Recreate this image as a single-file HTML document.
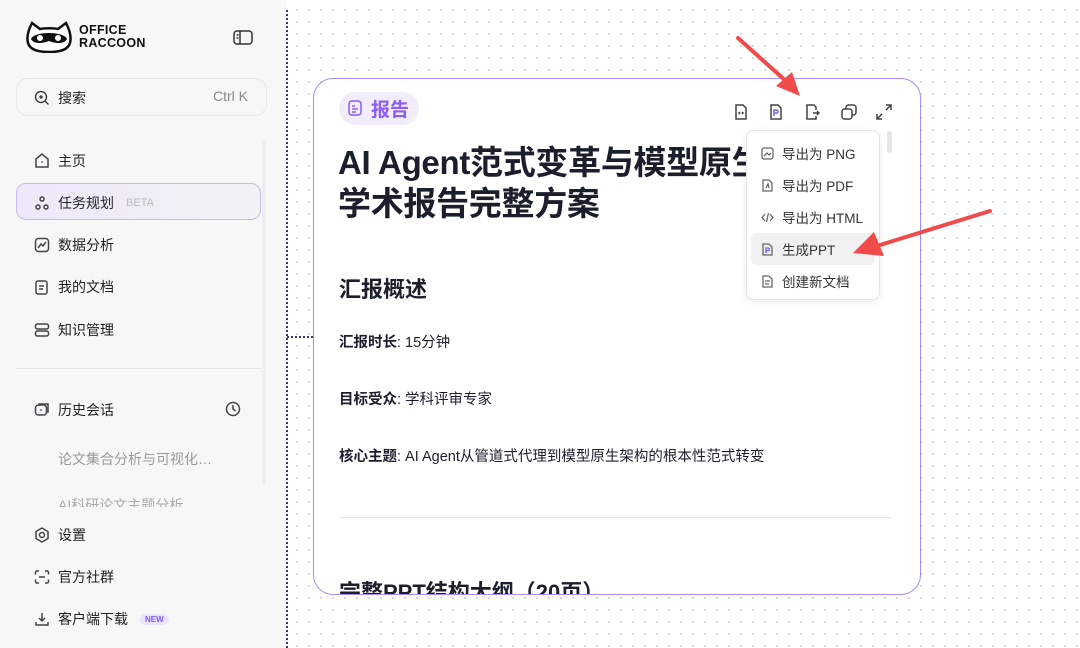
<!DOCTYPE html>
<html><head><meta charset="utf-8"><style>
*{margin:0;padding:0;box-sizing:border-box}
body{width:1080px;height:648px;overflow:hidden;font-family:"Liberation Sans","Noto Sans CJK SC",sans-serif;background:#fff;position:relative;color:#1f2430}
.side{position:absolute;left:0;top:0;width:286px;height:648px;background:#f7f7f7}
.canvas{position:absolute;left:287px;top:0;right:0;bottom:0;background-color:#fff;background-image:radial-gradient(#d8d8d8 1px,transparent 1.3px);background-size:12px 12px;background-position:4px 4px}
.vline{position:absolute;left:286px;top:10px;width:2px;height:638px;border-left:2px dotted #3b3470}
.nav{position:absolute;left:34px;font-size:14px;color:#222;display:flex;align-items:center;gap:8px}
.nav svg{width:16px;height:16px;fill:none;stroke:#444;stroke-width:1.5}
.card{position:absolute;left:313px;top:78px;width:608px;height:517px;border:1.5px solid #a78bfa;border-radius:20px;background:#fff;overflow:hidden}
.menu{position:absolute;left:746px;top:130px;width:134px;height:170px;background:#fff;border:1px solid #e5e5e5;border-radius:8px;box-shadow:0 2px 8px rgba(0,0,0,.08)}
.mi{position:absolute;left:14px;font-size:13.5px;color:#333;display:flex;align-items:center;gap:8px}
.mi svg{width:13px;height:13px;fill:none;stroke:#666;stroke-width:1.3}
.ti svg{position:absolute;width:16px;height:16px;fill:none;stroke:#444;stroke-width:1.5;top:104px}
</style></head><body>
<div class="side">
 <svg style="position:absolute;left:24px;top:21px" width="50" height="32" viewBox="0 0 50 32"><path d="M4 22 C2 14 6 6 8 2 L16 8 C20 7 30 7 34 8 L42 2 C44 6 48 14 46 22 C44 29 36 31 25 31 C14 31 6 29 4 22Z" fill="#fff" stroke="#111" stroke-width="2.5"/><path d="M7 18 C10 10 40 10 43 18 C40 24 30 22 25 20 C20 22 10 24 7 18Z" fill="#111"/><circle cx="16" cy="17" r="3" fill="#fff"/><circle cx="34" cy="17" r="3" fill="#fff"/></svg>
 <div style="position:absolute;left:79px;top:24px;font-weight:900;font-size:12.5px;line-height:13px;letter-spacing:.3px;color:#111">OFFICE<br>RACCOON</div>
 <svg style="position:absolute;left:233px;top:30px" width="20" height="16" viewBox="0 0 20 16" fill="none" stroke="#333" stroke-width="1.5"><rect x="1" y="1" width="18" height="13" rx="3"/><path d="M7 1v13M3.5 5h2M3.5 8h2"/></svg>
 <div style="position:absolute;left:16px;top:78px;width:251px;height:38px;border:1px solid #e6e6e6;border-radius:12px;background:#f7f7f7"></div>
 <div class="nav" style="top:88px"><svg viewBox="0 0 16 16"><circle cx="7" cy="7" r="5.5"/><path d="M11 11l3.5 3.5"/><circle cx="7" cy="7" r="1" fill="#444"/></svg>搜索</div>
 <div style="position:absolute;left:213px;top:88px;font-size:14px;color:#888">Ctrl K</div>
 <div style="position:absolute;left:262px;top:140px;width:4px;height:345px;background:#eee;border-radius:2px"></div>
 <div class="nav" style="top:151px"><svg viewBox="0 0 16 16"><path d="M2 6l6-5 6 5v8H2z"/><circle cx="8" cy="9" r="1" fill="#7c5cf0" stroke="none"/></svg>主页</div>
 <div style="position:absolute;left:16px;top:183px;width:245px;height:37px;border:1.5px solid #c9b8f5;border-radius:10px;background:linear-gradient(90deg,#ede8fa,#f1f2f4)"></div>
 <div class="nav" style="top:193px"><svg viewBox="0 0 16 16"><circle cx="8" cy="4" r="2"/><circle cx="4" cy="12" r="2"/><circle cx="12" cy="12" r="2"/></svg>任务规划 <span style="font-size:11px;color:#bbb;margin-left:4px">BETA</span></div>
 <div class="nav" style="top:235px"><svg viewBox="0 0 16 16"><rect x="1.5" y="1.5" width="13" height="13" rx="3"/><path d="M4 11l3-4 2 2 3-4"/></svg>数据分析</div>
 <div class="nav" style="top:277px"><svg viewBox="0 0 16 16"><rect x="2" y="2" width="11" height="13" rx="2"/><path d="M5 7h5M5 10h4"/></svg>我的文档</div>
 <div class="nav" style="top:320px"><svg viewBox="0 0 16 16"><rect x="1.5" y="2" width="13" height="5" rx="2"/><rect x="1.5" y="9" width="13" height="5" rx="2"/></svg>知识管理</div>
 <div style="position:absolute;left:16px;top:368px;width:246px;height:1px;background:#e4e4e4"></div>
 <div class="nav" style="top:400px"><svg viewBox="0 0 16 16"><rect x="1.5" y="3" width="11" height="10" rx="3"/><path d="M5 3V2h9v8h-1.5"/><circle cx="7" cy="8" r="1" fill="#7c5cf0" stroke="none"/></svg>历史会话</div>
 <svg style="position:absolute;left:225px;top:401px" width="16" height="16" viewBox="0 0 16 16" fill="none" stroke="#444" stroke-width="1.5"><circle cx="8" cy="8" r="6.5"/><path d="M8 4v4l2.5 2"/></svg>
 <div style="position:absolute;left:58px;top:449px;font-size:14px;color:#999">论文集合分析与可视化…</div>
 <div style="position:absolute;left:58px;top:495px;font-size:14px;color:#aaa;height:12px;overflow:hidden">AI科研论文主题分析</div>
 <div class="nav" style="top:525px"><svg viewBox="0 0 16 16"><path d="M8 1l6 3.5v7L8 15l-6-3.5v-7z"/><circle cx="8" cy="8" r="2.5"/></svg>设置</div>
 <div class="nav" style="top:567px"><svg viewBox="0 0 16 16"><path d="M5 2H3a1.5 1.5 0 00-1.5 1.5v2M11 2h2a1.5 1.5 0 011.5 1.5v2M5 14H3a1.5 1.5 0 01-1.5-1.5v-2M11 14h2a1.5 1.5 0 001.5-1.5v-2M5 8h6"/></svg>官方社群</div>
 <div class="nav" style="top:609px"><svg viewBox="0 0 16 16"><path d="M8 2v8M5 7l3 3 3-3M2 11v3h12v-3"/></svg>客户端下载 <span style="font-size:8px;font-weight:bold;color:#7c5cf0;background:#e9e4fb;border-radius:8px;padding:1px 5px;margin-left:4px">NEW</span></div>
</div>
<div class="canvas"></div>
<div class="vline"></div>
<div style="position:absolute;left:287px;top:336px;width:30px;border-top:2px dotted #3b3470"></div>
<div class="card">
 <div style="position:absolute;left:25px;top:13px;width:80px;height:33px;border-radius:17px;background:#f1edfd"></div>
 <svg style="position:absolute;left:34px;top:21px" width="14" height="16" viewBox="0 0 14 16" fill="none" stroke="#8b5cf6" stroke-width="1.5"><rect x="1" y="1" width="12" height="14" rx="3"/><path d="M4 6h3M4 9h6M4 12h4"/></svg>
 <div style="position:absolute;left:57px;top:16px;font-size:19px;font-weight:bold;color:#8b5cf6">报告</div>
 <div style="position:absolute;left:24px;top:63px;font-size:33px;font-weight:bold;line-height:41px;color:#1a1f2b;width:560px;letter-spacing:-.3px">AI Agent范式变革与模型原生架构<br>学术报告完整方案</div>
 <div style="position:absolute;left:25px;top:193px;font-size:22px;font-weight:bold;color:#1a1f2b">汇报概述</div>
 <div style="position:absolute;left:25px;top:252px;font-size:14.5px;color:#1a1f2b"><b>汇报时长</b>: 15分钟</div>
 <div style="position:absolute;left:25px;top:309px;font-size:14.5px;color:#1a1f2b"><b>目标受众</b>: 学科评审专家</div>
 <div style="position:absolute;left:25px;top:366px;font-size:14.5px;color:#1a1f2b"><b>核心主题</b>: AI Agent从管道式代理到模型原生架构的根本性范式转变</div>
 <div style="position:absolute;left:25px;top:438px;width:552px;height:1px;background:#e5e5e5"></div>
 <div style="position:absolute;left:25px;top:496px;font-size:22px;font-weight:bold;color:#1a1f2b">完整PPT结构大纲（20页）</div>
 <div style="position:absolute;left:573px;top:52px;width:5px;height:22px;border-radius:3px;background:#e6e6e6"></div>
</div>
<div class="ti">
 <svg style="left:733px" viewBox="0 0 16 16"><path d="M3 1h7l3 3v11H3z"/><path d="M7 8l-1 1 1 1M9 8l1 1-1 1"/></svg>
 <svg style="left:768px" viewBox="0 0 16 16"><path d="M3 1h7l3 3v11H3z"/><path d="M6 12V6h2.5a1.5 1.5 0 010 3H6" stroke="#7c5cf0"/></svg>
 <svg style="left:804px" viewBox="0 0 16 16"><path d="M12 6V3L10 1H3v14h9v-3"/><path d="M9 9h6M13 7l2 2-2 2"/></svg>
 <svg style="left:841px" viewBox="0 0 16 16"><rect x="1" y="5" width="10" height="10" rx="2.5"/><path d="M5 5V3.5A2.5 2.5 0 017.5 1h5A2.5 2.5 0 0115 3.5v5a2.5 2.5 0 01-2.5 2.5H11"/></svg>
 <svg style="left:876px" viewBox="0 0 16 16"><path d="M10 1h5v5M15 1l-5 5M6 15H1v-5M1 15l5-5"/></svg>
</div>
<div class="menu">
 <div style="position:absolute;left:4px;top:102px;width:124px;height:32px;background:#f1f1f1;border-radius:6px"></div>
 <div class="mi" style="top:12px"><svg viewBox="0 0 13 13"><rect x="1" y="1" width="11" height="11" rx="2"/><path d="M3 9l3-3 2 2 2-2"/></svg>导出为 PNG</div>
 <div class="mi" style="top:44px"><svg viewBox="0 0 13 13"><path d="M2 1h6l3 3v8H2z"/><path d="M5 9l2-4 1 4"/></svg>导出为 PDF</div>
 <div class="mi" style="top:76px"><svg viewBox="0 0 13 13"><path d="M4 3L1 6.5 4 10M9 3l3 3.5L9 10M7.5 2l-2 9"/></svg>导出为 HTML</div>
 <div class="mi" style="top:108px"><svg viewBox="0 0 13 13"><path d="M2 1h6l3 3v8H2z"/><path d="M5 10V5h2a1.3 1.3 0 010 2.6H5" stroke="#7c5cf0"/></svg>生成PPT</div>
 <div class="mi" style="top:140px"><svg viewBox="0 0 13 13"><path d="M2 1h6l3 3v8H2z"/><path d="M4 6h5M4 9h4"/></svg>创建新文档</div>
</div>
<svg style="position:absolute;left:0;top:0" width="1080" height="648">
 <path d="M738 38 L787 82" stroke="#f04a4a" stroke-width="4" stroke-linecap="round"/>
 <polygon points="800,96 776,86 792,72" fill="#f04a4a"/>
 <path d="M990 211 L880 245" stroke="#f04a4a" stroke-width="4" stroke-linecap="round"/>
 <polygon points="853,253 874,232 884,256" fill="#f04a4a"/>
</svg>
</body></html>
